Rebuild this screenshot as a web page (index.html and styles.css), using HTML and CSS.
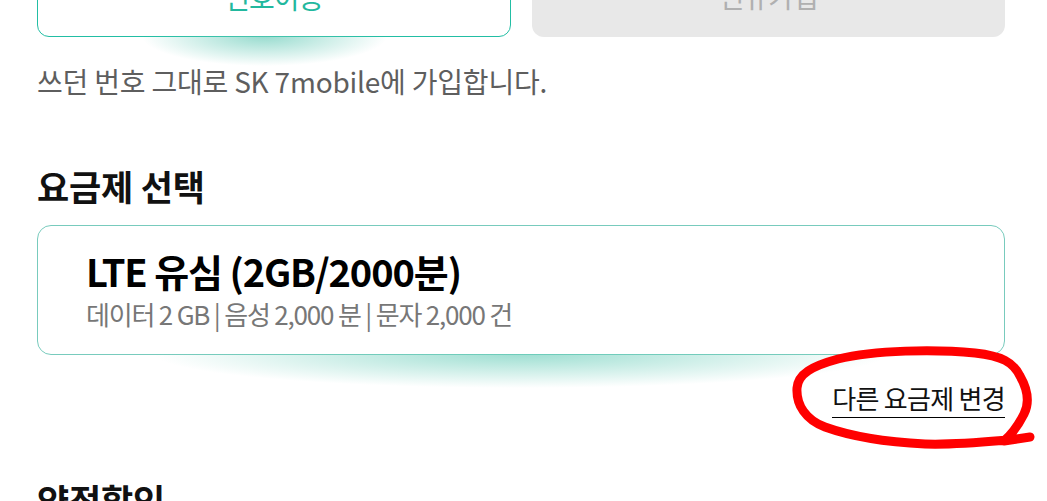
FILE: index.html
```html
<!DOCTYPE html>
<html>
<head>
<title>가입 유형 선택</title>
<link rel="stylesheet" href="styles.css">
</head>
<body>
<div id="page">
    <div class="tabs">
        <div class="tab active">번호이동</div>
        <div class="tab">신규가입</div>
    </div>
    <p class="desc">쓰던 번호 그대로 SK 7mobile에 가입합니다.</p>

    <h3 class="title">요금제 선택</h3>
    <div class="plan">
        <div class="plan-name">LTE 유심 (2GB/2000분)</div>
        <div class="plan-info">데이터 2 GB | 음성 2,000 분 | 문자 2,000 건</div>
    </div>
    <div class="more">
        <a class="change" href="#">다른 요금제 변경</a>
    </div>

    <h3 class="title">약정할인</h3>
</div>
<svg class="mark" width="1047" height="501" viewBox="0 0 1047 501">
    <path d="M1008 440 C985 442 955 445 925 444 C885 442 850 436 825 427 C806 420 796 405 797 388 C798 374 812 366 838 359 C875 350 935 349 975 353 C1002 356 1013 362 1020 376 C1028 390 1030 402 1024 414 C1018 426 1012 434 1004 441 L1030 437" />
</svg>
</body>
</html>
```

FILE: styles.css
```css
html, body {
    margin: 0;
    background-color: #fff;
    font-family: "Noto Sans CJK KR", sans-serif;
    overflow: hidden;
}
#page {
    padding: 0 42px 0 37px;
}
.tabs {
    display: grid;
    grid-template-columns: 1fr 1fr;
    gap: 21px;
    margin-top: -44px;
}
.tab {
    position: relative;
    box-sizing: border-box;
    height: 81px;
    padding-top: 26px;
    border-radius: 12px;
    background-color: #e8e8e8;
    color: #b0b0b0;
    font-size: 28px;
    line-height: 28px;
    letter-spacing: -1px;
    text-align: center;
}
.tab.active {
    background-color: #fff;
    border: 1px solid #22bea4;
    color: #22b89e;
}
.tab.active::after {
    content: "";
    position: absolute;
    left: 22%;
    right: 26%;
    top: 100%;
    height: 30px;
    background: radial-gradient(ellipse 50% 100% at 50% 0, rgba(95, 200, 180, 0.65), rgba(95, 200, 180, 0) 100%);
}
.desc {
    margin: 25px 0 0;
    color: #5e5e5e;
    font-size: 28px;
    line-height: 38px;
    letter-spacing: -0.2px;
}
.title {
    margin: 0;
    color: #111;
    font-size: 35px;
    line-height: 44px;
    font-weight: bold;
    letter-spacing: -0.2px;
}
.desc + .title {
    margin-top: 64px;
}
.plan {
    position: relative;
    margin-top: 17px;
    padding: 22px 48px 23px;
    border: 1px solid #78cbbd;
    border-radius: 14px;
    background-color: #fff;
}
.plan::after {
    content: "";
    position: absolute;
    left: 12%;
    right: 12%;
    top: 100%;
    height: 34px;
    background: radial-gradient(ellipse 50% 100% at 50% 0, rgba(105, 205, 185, 0.65), rgba(105, 205, 185, 0) 100%);
}
.plan-name {
    color: #000;
    font-size: 38px;
    line-height: 46px;
    font-weight: bold;
    letter-spacing: -1.1px;
}
.plan-info {
    margin-top: 3px;
    color: #777;
    font-size: 26px;
    line-height: 34px;
    letter-spacing: -1.2px;
}
.more {
    margin-top: 28px;
    text-align: right;
}
.change {
    display: inline-block;
    padding-bottom: 4px;
    border-bottom: 1px solid #000;
    color: #111;
    font-size: 26px;
    line-height: 30px;
    letter-spacing: -0.7px;
    text-decoration: none;
}
.more + .title {
    margin-top: 60px;
}
.mark {
    position: absolute;
    top: 0;
    left: 0;
    pointer-events: none;
}
.mark path {
    fill: none;
    stroke: #ff0000;
    stroke-width: 9;
    stroke-linecap: round;
    stroke-linejoin: round;
}
```
